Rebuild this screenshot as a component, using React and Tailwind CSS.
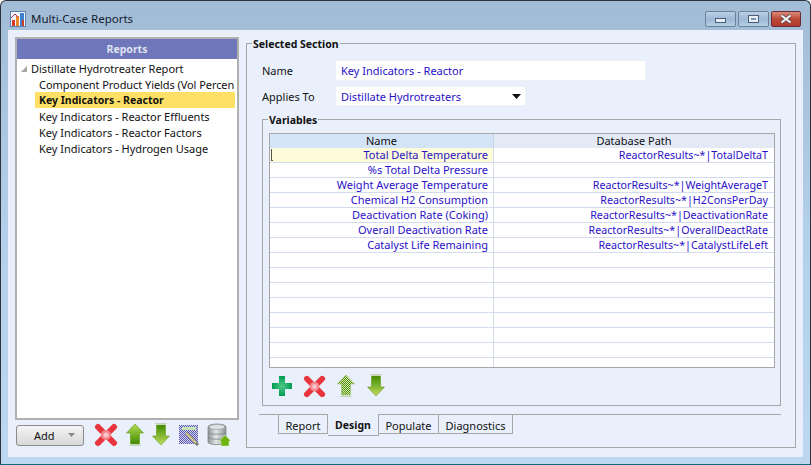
import React from "react";

const font = { fontFamily: '"Noto Sans","Open Sans",sans-serif' };

function RedX({ size = 24 }) {
  return (
    <svg width={size} height={size} viewBox="0 0 24 24">
      <path d="M4 4 L20 20 M20 4 L4 20" stroke="#e8343c" strokeWidth="6" strokeLinecap="round" />
      <circle cx="12" cy="12" r="5" fill="#f4868d" />
      <circle cx="12" cy="12" r="2.5" fill="#f9c4c8" />
    </svg>
  );
}

function ArrowUp({ hatched = false }) {
  return (
    <svg width="18" height="24" viewBox="0 0 18 24">
      <defs>
        <linearGradient id="upg" x1="0" y1="0" x2="0" y2="1">
          <stop offset="0%" stopColor="#b6dc52" />
          <stop offset="100%" stopColor="#3f8a00" />
        </linearGradient>
        <pattern id="hatchUp" width="2" height="2" patternUnits="userSpaceOnUse">
          <rect width="2" height="2" fill="#d8ecb0" />
          <rect width="1" height="1" fill="#4c8c0a" />
          <rect x="1" y="1" width="1" height="1" fill="#4c8c0a" />
        </pattern>
      </defs>
      <path d="M9 1 L17.5 10 L13.5 10 L13.5 21 L4.5 21 L4.5 10 L0.5 10 Z" fill={hatched ? "url(#hatchUp)" : "url(#upg)"} stroke={hatched ? "#9cc060" : "#5f9a12"} strokeWidth="0.6" />
      <rect x="3" y="22" width="12" height="1" fill="#c8d2c0" />
    </svg>
  );
}

function ArrowDown() {
  return (
    <svg width="18" height="24" viewBox="0 0 18 24">
      <defs>
        <linearGradient id="dng" x1="0" y1="0" x2="0" y2="1">
          <stop offset="0%" stopColor="#3f8a00" />
          <stop offset="100%" stopColor="#c0e060" />
        </linearGradient>
      </defs>
      <rect x="3" y="0" width="12" height="1" fill="#c8d2c0" />
      <path d="M4.5 2 L13.5 2 L13.5 13 L17.5 13 L9 22 L0.5 13 L4.5 13 Z" fill="url(#dng)" stroke="#6a9c18" strokeWidth="0.6" />
    </svg>
  );
}

function Plus() {
  return (
    <svg width="22" height="22" viewBox="0 0 22 22">
      <defs>
        <radialGradient id="plusg" cx="50%" cy="50%" r="50%">
          <stop offset="0%" stopColor="#52c88a" />
          <stop offset="100%" stopColor="#009a50" />
        </radialGradient>
      </defs>
      <path d="M8 1 H14 V8 H21 V14 H14 V21 H8 V14 H1 V8 H8 Z" fill="url(#plusg)" />
    </svg>
  );
}

function DesignIcon() {
  return (
    <svg width="22" height="22" viewBox="0 0 22 22">
      <defs>
        <pattern id="hatchBlue" width="2" height="2" patternUnits="userSpaceOnUse">
          <rect width="2" height="2" fill="#d4d4ef" />
          <rect width="1" height="1" fill="#5a5ab2" />
          <rect x="1" y="1" width="1" height="1" fill="#5a5ab2" />
        </pattern>
      </defs>
      <rect x="1" y="1" width="19" height="19" fill="url(#hatchBlue)" />
      <rect x="4" y="3" width="14" height="3" fill="#c4e4b4" />
      <path d="M8 9 L20 21" stroke="#777" strokeWidth="3" />
      <path d="M8 9 L18 19" stroke="#e8d48a" strokeWidth="1.5" />
    </svg>
  );
}

function DbIcon() {
  return (
    <svg width="24" height="24" viewBox="0 0 24 24">
      <defs>
        <linearGradient id="dbg" x1="0" y1="0" x2="1" y2="0">
          <stop offset="0%" stopColor="#8e9698" />
          <stop offset="45%" stopColor="#e2e6e6" />
          <stop offset="100%" stopColor="#8a9294" />
        </linearGradient>
      </defs>
      <path d="M1 4 C1 0 19 0 19 4 L19 19 C19 22.5 1 22.5 1 19 Z" fill="url(#dbg)" stroke="#777f82" strokeWidth="0.7" />
      <ellipse cx="10" cy="4" rx="8" ry="2.4" fill="#dfe3e3" stroke="#8a9294" strokeWidth="0.6" />
      <path d="M1 9 C1 12 19 12 19 9 M1 14 C1 17 19 17 19 14" fill="none" stroke="#7c8486" strokeWidth="0.8" />
      <path d="M18 12 L24 18 L22 18 L22 23 L14 23 L14 18 L12 18 Z" fill="#6fb310" stroke="#eaf2d8" strokeWidth="0.5" />
    </svg>
  );
}

function AppIcon() {
  return (
    <svg width="16" height="16" viewBox="0 0 16 16">
      <rect x="0.5" y="0.5" width="15" height="15" fill="#f4f8fc" stroke="#5d7fb0" />
      <rect x="2" y="9" width="3" height="6" fill="#d43a2a" />
      <rect x="6" y="5" width="3" height="10" fill="#e8862a" />
      <rect x="10" y="2" width="4" height="13" fill="#3f7fd0" />
      <path d="M1 7 L5 3 L8 6" stroke="#c02a6a" strokeWidth="1" fill="none" />
      <rect x="12" y="9" width="2" height="6" fill="#d43a2a" />
    </svg>
  );
}

function WinBtn({ w, close, children }) {
  return (
    <div
      className={
        "h-[16px] rounded-[2px] border flex items-center justify-center " +
        (close
          ? "border-[#6a2a3a] bg-gradient-to-b from-[#d98a78] via-[#bc4a38] to-[#b23a2c]"
          : "border-[#6d8098] bg-gradient-to-b from-[#bdd0e6] via-[#9db8d6] to-[#b6cfe6]")
      }
      style={{ width: w }}
    >
      {children}
    </div>
  );
}

const reports = [
  "Component Product Yields (Vol Percen",
  "Key Indicators - Reactor",
  "Key Indicators - Reactor Effluents",
  "Key Indicators - Reactor Factors",
  "Key Indicators - Hydrogen Usage",
];

const rows = [
  ["Total Delta Temperature", "ReactorResults~*|TotalDeltaT"],
  ["%s Total Delta Pressure", ""],
  ["Weight Average Temperature", "ReactorResults~*|WeightAverageT"],
  ["Chemical H2 Consumption", "ReactorResults~*|H2ConsPerDay"],
  ["Deactivation Rate (Coking)", "ReactorResults~*|DeactivationRate"],
  ["Overall Deactivation Rate", "ReactorResults~*|OverallDeactRate"],
  ["Catalyst Life Remaining", "ReactorResults~*|CatalystLifeLeft"],
  ["", ""], ["", ""], ["", ""], ["", ""], ["", ""], ["", ""], ["", ""], ["", ""],
];

const tabs = [
  ["Report", "w-[50px]"],
  ["Design", "w-[51px]"],
  ["Populate", "w-[60px]"],
  ["Diagnostics", "w-[74px]"],
];

export default function App() {
  return (
    <div
      style={font}
      className="w-[811px] h-[465px] flex flex-col overflow-hidden rounded-t-[6px] border border-[#2a3440] border-b-[#0e6f80] bg-gradient-to-b from-[#a3bcd6] via-[#b4cfe9] to-[#bcd7ef] text-[11px] leading-[15px] text-[#111]"
    >
      <div className="h-[29px] shrink-0 flex items-start pt-[10px] pl-[9px] pr-[9px]">
        <AppIcon />
        <span className="ml-[5px] text-[11.5px] leading-[16px] text-[#10202e]">Multi-Case Reports</span>
        <div className="ml-auto flex gap-[2px]">
          <WinBtn w={31}>
            <div className="w-[11px] h-[5px] mt-[3px] bg-[#e8eef6] border border-[#4a5c78]" />
          </WinBtn>
          <WinBtn w={31}>
            <div className="w-[11px] h-[8px] bg-[#e8eef6] border border-[#4a5c78] flex items-center justify-center">
              <div className="w-[5px] h-[2px] bg-[#7f95b5]" />
            </div>
          </WinBtn>
          <WinBtn w={30} close>
            <svg width="14" height="10" viewBox="0 0 14 10">
              <path d="M2.5 1.5 L11.5 8.5 M11.5 1.5 L2.5 8.5" stroke="#5a4a50" strokeWidth="3.6" />
              <path d="M2.5 1.5 L11.5 8.5 M11.5 1.5 L2.5 8.5" stroke="#f2f2f2" strokeWidth="2.2" />
            </svg>
          </WinBtn>
        </div>
      </div>

      <div className="mx-[7px] h-[427px] bg-[#e9f0fb] pl-[7px] pt-[7px] pr-[8px] flex gap-[7px]">
        {/* Left */}
        <div className="w-[224px] shrink-0 flex flex-col">
          <div className="h-[383px] border-2 border-[#b0b0b0] bg-white">
            <div className="h-[20px] pt-[1px] bg-[#6f76b9] text-[#dfe3f3] font-bold flex items-center justify-center text-[10.5px]">
              Reports
            </div>
            <div className="pt-[1px]">
              <div className="h-[16px] flex items-center pl-[4px]">
                <svg width="6" height="6" viewBox="0 0 6 6" className="mr-[4px] mt-[1px]">
                  <path d="M6 0 V6 H0 Z" fill="#a6a6a6" />
                </svg>
                <span className="whitespace-nowrap">Distillate Hydrotreater Report</span>
              </div>
              {reports.map((r, i) => (
                <div
                  key={r}
                  className={
                    "h-[16px] flex items-center ml-[18px] mr-[2px] pl-[4px] whitespace-nowrap " +
                    (i === 0 ? "tracking-[-0.07px] " : "") +
                    (i === 1 ? "bg-[#ffe066] font-bold text-[10.5px] pt-[1px]" : "")
                  }
                >
                  {r}
                </div>
              ))}
            </div>
          </div>
          <div className="mt-[3px] ml-[1px] flex items-center">
            <div className="w-[68px] h-[21px] rounded-[3px] border border-[#8c8c8c] bg-gradient-to-b from-[#f4f4f4] to-[#d8d8d8] flex items-center pl-[17px] pr-[8px]">
              <span className="text-[#111]">Add</span>
              <svg width="7" height="4" viewBox="0 0 7 4" className="ml-auto">
                <path d="M0 0 H7 L3.5 4 Z" fill="#888" />
              </svg>
            </div>
            <div className="ml-[10px] flex items-center">
              <RedX size={24} />
              <div className="ml-[8px]"><ArrowUp /></div>
              <div className="ml-[8px]"><ArrowDown /></div>
              <div className="ml-[8px]"><DesignIcon /></div>
              <div className="ml-[7px]"><DbIcon /></div>
            </div>
          </div>
        </div>

        {/* Right */}
        <div className="relative w-[550px] shrink-0 h-[405px] mt-[6px] border border-[#a6a6a6] pt-[16px] px-[15px]">
          <span className="absolute left-[5px] top-[-7px] bg-[#e9f0fb] px-[1px] font-bold text-[10.5px] leading-[15px]">Selected Section</span>
          <div className="h-[21px] flex items-center">
            <span className="w-[73px]">Name</span>
            <div className="w-[311px] h-[21px] rounded-[2px] bg-white border border-[#eef2f8] flex items-center pl-[5px] text-[#2a10c8]">
              Key Indicators - Reactor
            </div>
          </div>
          <div className="h-[20px] mt-[5px] flex items-center">
            <span className="w-[73px]">Applies To</span>
            <div className="w-[191px] h-[20px] rounded-[2px] bg-white border border-[#eef2f8] flex items-center pl-[5px] pr-[3px] text-[#2a10c8]">
              Distillate Hydrotreaters
              <svg width="9" height="5" viewBox="0 0 9 5" className="ml-auto mr-[1px]">
                <path d="M0 0 H9 L4.5 5 Z" fill="#111" />
              </svg>
            </div>
          </div>

          <div className="relative mt-[13px] w-[519px] h-[287px] border border-[#a6a6a6] pl-[6px] pt-[13px]">
            <span className="absolute left-[5px] top-[-7px] bg-[#e9f0fb] px-[1px] font-bold text-[10.5px] leading-[15px]">Variables</span>
            <div className="w-[506px] h-[235px] border border-[#a6a6a6] bg-white overflow-hidden">
              <div className="grid grid-cols-[224px_1fr] h-[14px] leading-[14px] text-center">
                <div className="bg-[#d3e3f8] border-r border-[#c8d4e6]">Name</div>
                <div className="bg-[#e3eaf6]">Database Path</div>
              </div>
              {rows.map((r, i) => (
                <div key={i} className="grid grid-cols-[224px_1fr] h-[15px] leading-[14px] border-b border-[#d3dcec] text-right text-[#2a10c8]">
                  <div className={"relative border-r border-[#d3dcec] pr-[5px] whitespace-nowrap " + (i === 0 ? "bg-[#fefbd8]" : "")}>
                    {i === 0 && <span className="absolute left-[1px] top-[1px] h-[12px] w-[2px] border-l border-b border-[#555]" />}
                    {r[0]}
                  </div>
                  <div className="pr-[6px] whitespace-nowrap text-[10.7px]">{r[1]}</div>
                </div>
              ))}
            </div>
            <div className="mt-[6px] ml-[2px] flex items-center">
              <Plus />
              <div className="ml-[10px]"><RedX size={23} /></div>
              <div className="ml-[11px]"><ArrowUp hatched /></div>
              <div className="ml-[12px]"><ArrowDown /></div>
            </div>
          </div>

          <div className="mt-[8px] ml-[-3px] mr-[-1px] border-t border-[#a6a6a6] pl-[19px] flex items-start">
            {tabs.map(([t, w]) => {
              const active = t === "Design";
              return (
                <div
                  key={t}
                  className={
                    w + " flex items-center justify-center pt-[2px] border-[#a6a6a6] border-r " +
                    (t === "Report" ? "border-l " : "") +
                    (active
                      ? "h-[22px] mt-[-1px] border-l-0 border-b bg-[#e9f0fb] font-bold text-[10.5px]"
                      : "h-[19px] border-b")
                  }
                >
                  {t}
                </div>
              );
            })}
          </div>
        </div>
      </div>
    </div>
  );
}
